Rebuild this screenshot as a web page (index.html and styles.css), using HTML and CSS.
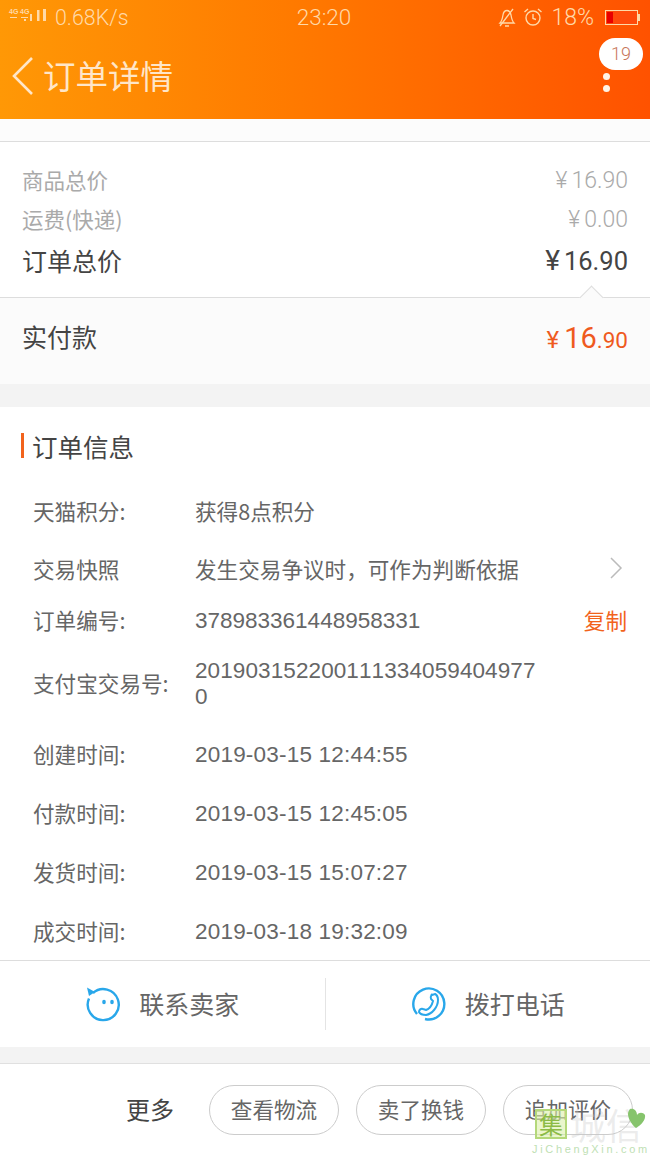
FILE: index.html
```html
<!DOCTYPE html>
<html lang="zh">
<head>
  <meta charset="UTF-8">
  <meta name="viewport" content="width=device-width, initial-scale=1.0">
  <title>订单详情</title>
  <link rel="stylesheet" href="styles.css">
</head>
<body>

  <header class="top">
    <div class="status">
      <div class="status-left">
        <svg class="signal" width="40" height="20" viewBox="0 0 40 20">
          <g fill="#ffd9a8">
            <rect x="16" y="12" width="2" height="2"/>
            <rect x="22" y="7" width="2" height="7"/>
            <rect x="29" y="3" width="2.5" height="11"/>
            <rect x="35" y="2" width="3" height="12"/>
            <rect x="2" y="10" width="7" height="1"/>
            <rect x="13" y="10" width="7" height="1"/>
          </g>
          <text x="1" y="7" class="signal-text">4G</text>
          <text x="12" y="7" class="signal-text">4G</text>
        </svg>
        <span>0.68K/s</span>
      </div>
      <div class="status-time">23:20</div>
      <div class="status-right">
        <svg class="bell" width="18" height="20" viewBox="0 0 18 20" fill="none" stroke="#ffd9a8" stroke-width="1.3">
          <path d="M2 16c2-2 2.500-5 3-8 .4-2.500 2-4.500 4-4.500s3.500 2 4 4.500c.5 3 1 6 3 8z"/>
          <path d="M7 19h4M2 19L15 2"/>
        </svg>
        <svg class="alarm" width="20" height="20" viewBox="0 0 20 20" fill="none" stroke="#ffd9a8" stroke-width="1.4">
          <circle cx="10" cy="11" r="7"/>
          <path d="M10 7v4.500l3 1M1.500 5L5 2M18.500 5L15 2"/>
        </svg>
        <span class="battery-text">18%</span>
        <div class="battery"><div class="battery-fill"></div></div>
      </div>
    </div>
    <div class="nav">
      <svg class="back" width="24" height="40" viewBox="0 0 24 40" fill="none" stroke="#ffe6c8" stroke-width="2.6">
        <path d="M21 2L3 20l18 18"/>
      </svg>
      <h1>订单详情</h1>
      <div class="more">
        <span class="badge">19</span>
        <i class="dot"></i>
        <i class="dot"></i>
      </div>
    </div>
  </header>

  <div class="top-gap"></div>

  <section class="price-card">
    <div class="price-rows">
      <div class="price-row muted"><span>商品总价</span><span class="amount"><small>¥</small>16.90</span></div>
      <div class="price-row muted"><span>运费(快递)</span><span class="amount"><small>¥</small>0.00</span></div>
      <div class="price-row total"><span>订单总价</span><span class="amount"><small>¥</small>16.90</span></div>
    </div>
    <div class="paid">
      <span class="arrow"></span>
      <span>实付款</span>
      <span class="paid-amount"><small>¥</small><b>16</b>.90</span>
    </div>
  </section>

  <section class="info">
    <h2>订单信息</h2>
    <div class="info-row row-a"><span class="label">天猫积分:</span><span class="value">获得8点积分</span></div>
    <div class="info-row row-b">
      <span class="label">交易快照</span><span class="value">发生交易争议时，可作为判断依据</span>
      <svg class="chevron" width="14" height="22" viewBox="0 0 14 22" fill="none" stroke="#bbb" stroke-width="1.5"><path d="M2 1l10 10L2 21"/></svg>
    </div>
    <div class="info-row row-c"><span class="label">订单编号:</span><span class="value num">378983361448958331</span><span class="copy">复制</span></div>
    <div class="info-row row-d"><span class="label">支付宝交易号:</span><span class="value num wrap">2019031522001113340594049770</span></div>
    <div class="info-row row-e"><span class="label">创建时间:</span><span class="value num date">2019-03-15 12:44:55</span></div>
    <div class="info-row"><span class="label">付款时间:</span><span class="value num date">2019-03-15 12:45:05</span></div>
    <div class="info-row"><span class="label">发货时间:</span><span class="value num date">2019-03-15 15:07:27</span></div>
    <div class="info-row"><span class="label">成交时间:</span><span class="value num date">2019-03-18 19:32:09</span></div>
  </section>

  <section class="contact">
    <div class="contact-item">
      <svg width="36" height="36" viewBox="0 0 36 36" fill="none" stroke="#29a7ea" stroke-width="2.4">
        <path d="M8 7A15.500 15.500 0 1 1 4 12.500"/>
        <path d="M2 1.500L10 6L4 10z" fill="#29a7ea" stroke="none"/>
        <ellipse cx="19" cy="16" rx="1.800" ry="2.200" fill="#29a7ea" stroke="none"/>
        <ellipse cx="27" cy="16" rx="1.800" ry="2.200" fill="#29a7ea" stroke="none"/>
      </svg>
      <span>联系卖家</span>
    </div>
    <div class="contact-item with-line">
      <svg width="36" height="36" viewBox="0 0 36 36" fill="none" stroke="#29a7ea" stroke-width="2.4">
        <path d="M6 28A15.500 15.500 0 1 1 14 33"/>
        <path d="M21 9l3-1c2 1 3 3 3 6 0 7-6 14-12 15-3 0-6-1-7-3 0-2 2-4 4-3l3 1c3-1 6-5 7-9l-2-2c-1-2 0-3 1-5z" stroke-width="2"/>
      </svg>
      <span>拨打电话</span>
    </div>
  </section>

  <footer class="actions">
    <span class="more-text">更多</span>
    <span class="pill">查看物流</span>
    <span class="pill">卖了换钱</span>
    <span class="pill">追加评价</span>
  </footer>

  <div class="watermark">
    <div class="wm-top">
      <span class="wm-box">集</span>
      <span class="wm-name">城信</span>
      <svg class="wm-leaf" width="18" height="21" viewBox="0 0 18 21">
        <path d="M2 1c4-1 7 2 7 6 2-3 6-3 8 0 1 5-4 10-9 13C3 16 0 10 0 6c0-2 1-4 2-5z" fill="#86c46c"/>
      </svg>
    </div>
    <div class="wm-url">JiChengXin.com</div>
  </div>

</body>
</html>
```
FILE: styles.css
```css
* {
  box-sizing: border-box;
}

html, body {
  margin: 0;
  height: 1155px;
  overflow: hidden;
}

body {
  position: relative;
  font-family: "Noto Sans CJK SC", "Liberation Sans", sans-serif;
  background-color: #f3f3f3;
  color: #444;
}

.top {
  height: 119px;
  background: linear-gradient(90deg, #ff9806 0%, #ff7a00 45%, #ff5200 100%);
  color: #ffe6c8;
}

.status {
  height: 34px;
  display: grid;
  grid-template-columns: 1fr auto 1fr;
  align-items: center;
  padding: 0 10px 0 8px;
  font-family: Roboto, "Liberation Sans", sans-serif;
  font-size: 22.5px;
  font-weight: 300;
  color: #ffd9a8;
}

.status-left, .status-right {
  display: flex;
  align-items: center;
}

.status-left {
  gap: 7px;
  font-size: 21.4px;
}

.status-right {
  justify-content: flex-end;
}

.signal-text {
  font-family: "Liberation Sans", sans-serif;
  font-size: 7px;
  font-weight: 700;
  fill: #ffd9a8;
}

.bell {
  margin-right: 7px;
}

.alarm {
  margin-right: 8px;
}

.battery-text {
  margin-right: 11px;
  font-size: 23px;
}

.battery {
  position: relative;
  width: 33px;
  height: 15px;
  margin-right: 2px;
  border: 1px solid #ffd9a8;
  padding: 1px;
  background-color: #ff4a0a;
}

.battery::after {
  content: "";
  position: absolute;
  top: 3px;
  right: -3px;
  width: 2px;
  height: 7px;
  background-color: #ffd9a8;
}

.battery-fill {
  width: 6px;
  height: 100%;
  background-color: #e80000;
}

.nav {
  position: relative;
  height: 85px;
  display: flex;
  align-items: center;
  padding: 0 0 2px 11px;
}

.back {
  margin-right: 8px;
}

.nav h1 {
  margin: 0 0 2px;
  font-size: 32.5px;
  font-weight: 400;
}

.more {
  position: absolute;
  top: 4px;
  right: 7px;
  width: 44px;
  display: flex;
  flex-direction: column;
  align-items: center;
  gap: 5px;
}

.badge {
  width: 44px;
  height: 32px;
  margin-bottom: -2px;
  border-radius: 16px;
  background-color: #fff;
  color: #c8765a;
  font-family: Roboto, "Liberation Sans", sans-serif;
  font-size: 18px;
  font-weight: 300;
  line-height: 32px;
  text-align: center;
}

.dot {
  width: 7px;
  height: 7px;
  margin-right: 29px;
  border-radius: 50%;
  background-color: #fff4e6;
}

.top-gap {
  height: 22px;
  background-color: #fcfcfc;
}

.price-card {
  height: 243px;
  background-color: #fff;
  border-top: 1px solid #ddd;
}

.price-rows {
  height: 155px;
  padding: 18px 22px 0;
}

.price-row {
  display: flex;
  justify-content: space-between;
  align-items: center;
  height: 39px;
}

.price-row.muted {
  font-size: 21.5px;
  color: #aaa;
}

.price-row.total {
  height: 43px;
  font-size: 25px;
  color: #444;
}

.amount {
  padding-top: 2px;
  font-family: Roboto, "Liberation Sans", sans-serif;
  font-weight: 300;
  font-size: 23px;
}

.total .amount {
  font-size: 25.5px;
  font-weight: 400;
}

.amount small {
  font-size: 1em;
  margin-right: 4px;
}

.total .amount small {
  font-size: 1.1em;
}

.paid {
  position: relative;
  height: 87px;
  display: flex;
  justify-content: space-between;
  align-items: center;
  padding: 0 22px 10px;
  background-color: #fbfbfb;
  border-top: 1px solid #ddd;
  font-size: 25px;
  color: #444;
}

.arrow {
  position: absolute;
  top: -9px;
  right: 50px;
  width: 17px;
  height: 17px;
  background-color: #fbfbfb;
  border-top: 1px solid #ddd;
  border-left: 1px solid #ddd;
  transform: rotate(45deg);
}

.paid-amount {
  padding-top: 4px;
  font-family: Roboto, "Liberation Sans", sans-serif;
  font-size: 22.5px;
  color: #ef5a1e;
}

.paid-amount small {
  font-size: 24px;
  margin-right: 5px;
}

.paid-amount b {
  font-size: 29px;
  font-weight: 400;
}

.info {
  margin-top: 23px;
  height: 554px;
  background-color: #fff;
  border-bottom: 1px solid #ddd;
  padding-top: 26px;
}

.info h2 {
  margin: 0 0 23px 21px;
  height: 25px;
  line-height: 25px;
  padding-left: 8px;
  border-left: 3px solid #f2631c;
  font-size: 25.5px;
  font-weight: 400;
  color: #444;
}

.info-row {
  position: relative;
  display: flex;
  align-items: center;
  height: 59px;
  padding-left: 33px;
  font-size: 21.6px;
  color: #666;
}

.row-a, .row-b {
  height: 58px;
}

.row-c {
  height: 44px;
}

.row-d {
  height: 82px;
}

.row-e {
  height: 60px;
}

.label {
  width: 162px;
  flex: none;
  white-space: nowrap;
}

.value {
  color: #666;
}

.num {
  padding-top: 3px;
  font-family: "Liberation Sans", "Noto Sans CJK SC", sans-serif;
  font-size: 22.5px;
  font-kerning: none;
}

.date {
  letter-spacing: 0.2px;
}

.value.wrap {
  width: 345px;
  line-height: 26px;
  letter-spacing: 0.1px;
  word-break: break-all;
}

.copy {
  position: absolute;
  right: 23px;
  color: #f2631c;
}

.chevron {
  position: absolute;
  right: 27px;
}

.contact {
  height: 86px;
  display: flex;
  align-items: center;
  background-color: #fff;
}

.contact-item {
  flex: 1;
  height: 52px;
  display: flex;
  align-items: center;
  justify-content: center;
  gap: 18px;
  font-size: 25px;
  color: #666;
}

.contact-item span {
  margin-bottom: 2px;
}

.with-line {
  border-left: 1px solid #e4e4e4;
}

.actions {
  margin-top: 16px;
  height: 92px;
  display: flex;
  align-items: center;
  justify-content: flex-end;
  gap: 17px;
  padding-right: 17px;
  background-color: #fff;
  border-top: 1px solid #e0e0e0;
}

.more-text {
  font-size: 24px;
  color: #444;
  margin: 0 18px 2px 0;
}

.pill {
  width: 130px;
  height: 50px;
  border: 1px solid #ccc;
  border-radius: 25px;
  font-size: 21.6px;
  line-height: 46px;
  text-align: center;
  color: #666;
}

.watermark {
  position: absolute;
  left: 532px;
  top: 1104px;
  width: 118px;
  height: 51px;
}

.wm-top {
  position: relative;
  display: flex;
  align-items: center;
  height: 40px;
}

.wm-box {
  width: 32px;
  height: 30px;
  margin-left: 3px;
  border: 2px solid #b4d87a;
  background-color: rgba(220, 240, 170, 0.6);
  color: #8cbb45;
  font-size: 24px;
  line-height: 25px;
  text-align: center;
}

.wm-name {
  margin-left: 3px;
  font-size: 36px;
  line-height: 36px;
  color: rgba(200, 200, 200, 0.35);
}

.wm-leaf {
  position: absolute;
  top: 4px;
  left: 96px;
}

.wm-url {
  font-family: "Liberation Sans", sans-serif;
  font-size: 11px;
  line-height: 11px;
  letter-spacing: 2.7px;
  color: #c0dfb4;
  white-space: nowrap;
}
```
